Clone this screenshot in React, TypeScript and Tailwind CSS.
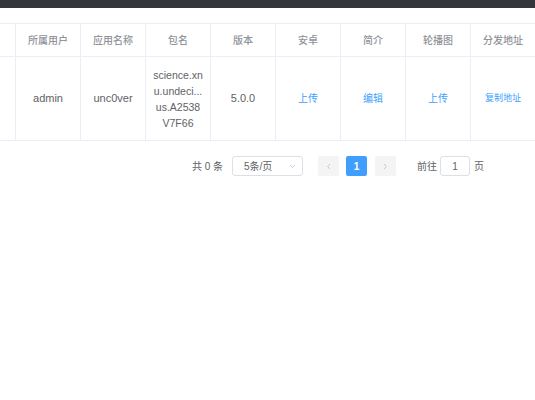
const HEADERS = ["所属用户", "应用名称", "包名", "版本", "安卓", "简介", "轮播图", "分发地址"];

const PKG_LINES = ["science.xn", "u.undeci...", "us.A2538", "V7F66"];

function Cell({ children }: { children?: React.ReactNode }) {
  return (
    <div className="flex items-center justify-center text-center border-l border-[#ebeef5] px-2">
      {children}
    </div>
  );
}

export default function App() {
  return (
    <div
      className="w-[535px] h-[400px] bg-white overflow-hidden"
      style={{ fontFamily: '"Liberation Sans", "Noto Sans CJK SC", sans-serif' }}
    >
      <div className="h-2 bg-[#33363a]" />

      <div className="mt-[15px] border-t border-b border-[#ebeef5] grid grid-cols-[15px_repeat(8,65px)] h-[34px] text-[10px] text-[#909399] font-medium">
        <div />
        {HEADERS.map((h) => (
          <div key={h} className="flex items-center justify-center border-l border-[#ebeef5]">
            {h}
          </div>
        ))}
      </div>

      <div className="border-b border-[#ebeef5] grid grid-cols-[15px_repeat(8,65px)] h-[84px] text-[11px] text-[#606266]">
        <div />
        <Cell>admin</Cell>
        <Cell>unc0ver</Cell>
        <Cell>
          <div className="leading-[16px] text-[10.5px]">
            {PKG_LINES.map((l) => (
              <div key={l}>{l}</div>
            ))}
          </div>
        </Cell>
        <Cell>5.0.0</Cell>
        <Cell>
          <span className="text-[10px] text-[#409eff]">上传</span>
        </Cell>
        <Cell>
          <span className="text-[10px] text-[#409eff]">编辑</span>
        </Cell>
        <Cell>
          <span className="text-[10px] text-[#409eff]">上传</span>
        </Cell>
        <Cell>
          <span className="text-[9px] text-[#409eff] whitespace-nowrap">复制地址</span>
        </Cell>
      </div>

      <div className="mt-[15px] flex items-center h-5 text-[10px] text-[#606266]">
        <span className="ml-[192px] w-[40px] whitespace-pre">共 0 条</span>
        <div className="w-[71px] h-5 border border-[#dcdfe6] rounded-[3px] flex items-center pl-[11px] pr-[6px]">
          <span className="flex-1">5条/页</span>
          <svg width="7" height="5" viewBox="0 0 7 5" className="text-[#c0c4cc]">
            <path d="M1 1l2.5 2.5L6 1" fill="none" stroke="currentColor" strokeWidth="0.8" />
          </svg>
        </div>
        <button className="ml-[15px] w-[21px] h-5 rounded-[2px] bg-[#f4f4f5] flex items-center justify-center">
          <svg width="5" height="7" viewBox="0 0 5 7">
            <path d="M4 1L1.5 3.5 4 6" fill="none" stroke="#c0c4cc" strokeWidth="0.9" />
          </svg>
        </button>
        <button className="ml-[7px] w-[21px] h-5 rounded-[2px] bg-[#409eff] text-white font-bold text-[10px] flex items-center justify-center">
          1
        </button>
        <button className="ml-[8px] w-[21px] h-5 rounded-[2px] bg-[#f4f4f5] flex items-center justify-center">
          <svg width="5" height="7" viewBox="0 0 5 7">
            <path d="M1 1l2.5 2.5L1 6" fill="none" stroke="#c0c4cc" strokeWidth="0.9" />
          </svg>
        </button>
        <span className="ml-[21px]">前往</span>
        <div className="ml-[3px] w-[30px] h-5 border border-[#dcdfe6] rounded-[3px] flex items-center justify-center">
          1
        </div>
        <span className="ml-[4px]">页</span>
      </div>
    </div>
  );
}
